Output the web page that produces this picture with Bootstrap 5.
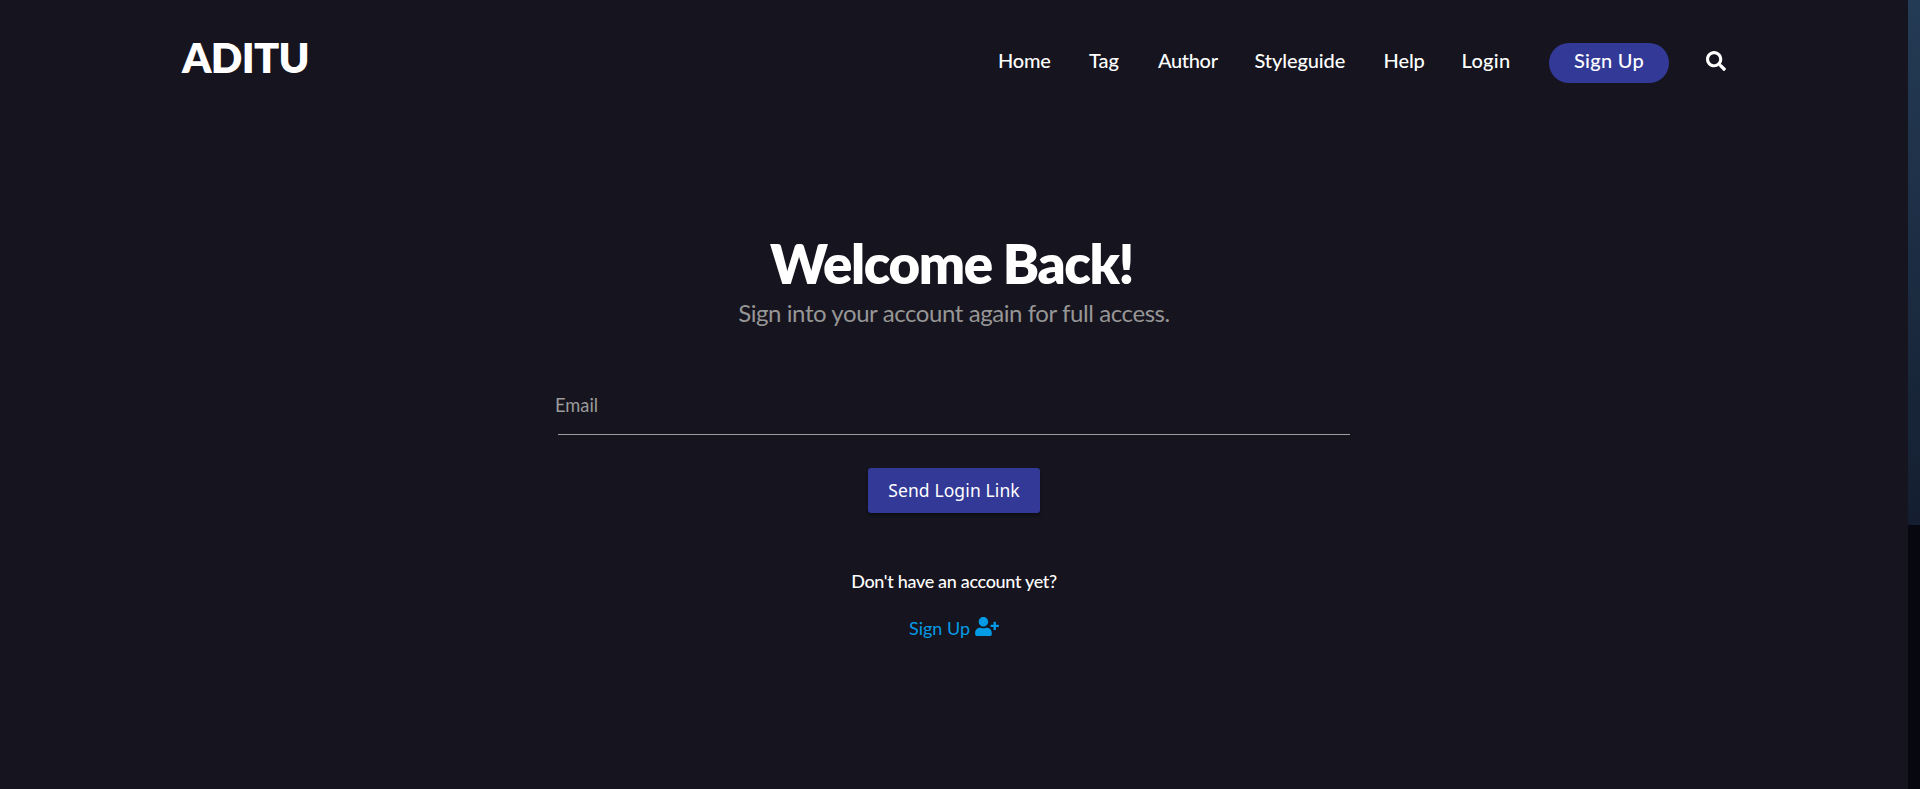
<!DOCTYPE html>
<html lang="en">
<head>
<meta charset="utf-8">
<meta name="viewport" content="width=device-width, initial-scale=1">
<title>Aditu - Login</title>
<link href="https://cdn.jsdelivr.net/npm/bootstrap@5.3.0/dist/css/bootstrap.min.css" rel="stylesheet">
<style>
body{background:#16141e;color:#fff;font-family:Lato,sans-serif;height:789px}
a{text-decoration:none}
.page-side{width:12px;background:#07080f}
.side-glow{height:525px;background:linear-gradient(#243b55,#141e30)}
.site-head{height:120px;padding:32px 182px 0 182px}
.logo{font-size:41.5px;line-height:51px;font-weight:800;letter-spacing:-.7px;color:#fff}
.menu{padding-top:11px;font-size:20px;font-weight:500;line-height:34px}
.menu .nav-link{color:#fff;padding:0 0 6px;white-space:nowrap}
.w-home{width:91px;letter-spacing:-.2px}
.w-tag{width:69px}
.w-author{width:96.5px;letter-spacing:-.35px}
.w-style{width:129px;letter-spacing:-.1px}
.w-help{width:78px;letter-spacing:-.1px}
.w-login{width:87.5px;letter-spacing:.3px}
.menu .pill{width:120px;height:40px;border-radius:20px;background:#333996;text-align:center;letter-spacing:.3px;margin-right:37px}
.login-box{width:792px;padding-top:113px}
.login-title{font-size:54.5px;line-height:60px;font-weight:800;letter-spacing:-1.4px;margin:0 0 2px -5px}
.login-sub{font-size:24px;line-height:36px;color:#969696;letter-spacing:-.42px;margin-bottom:61px}
.email-row{height:43px;border-bottom:1px solid #9e9ea2;margin-bottom:33px}
.email-input{background:none;border:0;outline:0;padding:0;margin-left:-3px;font-size:18.3px;line-height:26px;height:26px;color:#fff;display:block}
.email-input::placeholder{color:#9b9b9b;opacity:1}
.send{width:172px;height:45px;border:0;border-radius:3px;background:#333996;color:#fff;font:400 17.5px/45px "Noto Sans",sans-serif;letter-spacing:.12px;padding:0;box-shadow:0 2px 3px rgba(0,0,0,.4);margin-bottom:55px}
.ask{font-size:18px;line-height:26px;font-weight:500;letter-spacing:-.32px;margin-bottom:21px}
.join{color:#039be5;font-size:18px;line-height:26px}
.join svg{margin:2px 0 0 5px}
</style>
</head>
<body>
<div class="d-flex h-100">
  <div class="flex-grow-1">
    <header class="site-head d-flex justify-content-between align-items-start">
      <a class="logo" href="#">ADITU</a>
      <nav class="menu nav flex-nowrap">
        <a class="nav-link w-home" href="#">Home</a>
        <a class="nav-link w-tag" href="#">Tag</a>
        <a class="nav-link w-author" href="#">Author</a>
        <a class="nav-link w-style" href="#">Styleguide</a>
        <a class="nav-link w-help" href="#">Help</a>
        <a class="nav-link w-login" href="#">Login</a>
        <a class="nav-link pill" href="#">Sign Up</a>
        <a class="nav-link d-flex align-items-start pt-2" href="#" aria-label="Search"><svg width="20" height="20" viewBox="0 0 512 512" fill="currentColor"><path d="M505 442.700 405.300 343c-4.500-4.500-10.600-7-17-7H372c27.600-35.300 44-79.700 44-128C416 93.100 322.900 0 208 0S0 93.100 0 208s93.100 208 208 208c48.300 0 92.700-16.400 128-44v16.300c0 6.400 2.500 12.500 7 17l99.700 99.700c9.400 9.400 24.600 9.400 33.900 0l28.300-28.300c9.400-9.400 9.400-24.600.1-34zM208 336c-70.700 0-128-57.200-128-128 0-70.700 57.200-128 128-128 70.700 0 128 57.200 128 128 0 70.700-57.200 128-128 128z"/></svg></a>
      </nav>
    </header>
    <main class="login-box mx-auto text-center">
      <h1 class="login-title">Welcome Back!</h1>
      <p class="login-sub">Sign into your account again for full access.</p>
      <form>
        <div class="email-row"><input class="email-input" type="email" placeholder="Email" aria-label="Email"></div>
        <button class="send" type="button">Send Login Link</button>
      </form>
      <p class="ask">Don't have an account yet?</p>
      <a class="join d-flex justify-content-center" href="#"><span>Sign Up</span><svg width="24" height="19" viewBox="0 0 640 512" fill="currentColor"><path d="M624 208h-64v-64c0-8.800-7.200-16-16-16h-32c-8.800 0-16 7.200-16 16v64h-64c-8.800 0-16 7.200-16 16v32c0 8.800 7.200 16 16 16h64v64c0 8.800 7.200 16 16 16h32c8.800 0 16-7.200 16-16v-64h64c8.800 0 16-7.200 16-16v-32c0-8.800-7.200-16-16-16zm-400 48c70.700 0 128-57.300 128-128S294.700 0 224 0 96 57.300 96 128s57.300 128 128 128zm89.600 32h-16.700c-22.200 10.200-46.900 16-72.900 16s-50.600-5.800-72.900-16h-16.700C60.200 288 0 348.200 0 422.400V464c0 26.500 21.500 48 48 48h352c26.500 0 48-21.500 48-48v-41.600c0-74.200-60.200-134.400-134.400-134.400z"/></svg></a>
    </main>
  </div>
  <aside class="page-side flex-shrink-0"><div class="side-glow"></div></aside>
</div>
<script src="https://cdn.jsdelivr.net/npm/bootstrap@5.3.0/dist/js/bootstrap.bundle.min.js"></script>
</body>
</html>
